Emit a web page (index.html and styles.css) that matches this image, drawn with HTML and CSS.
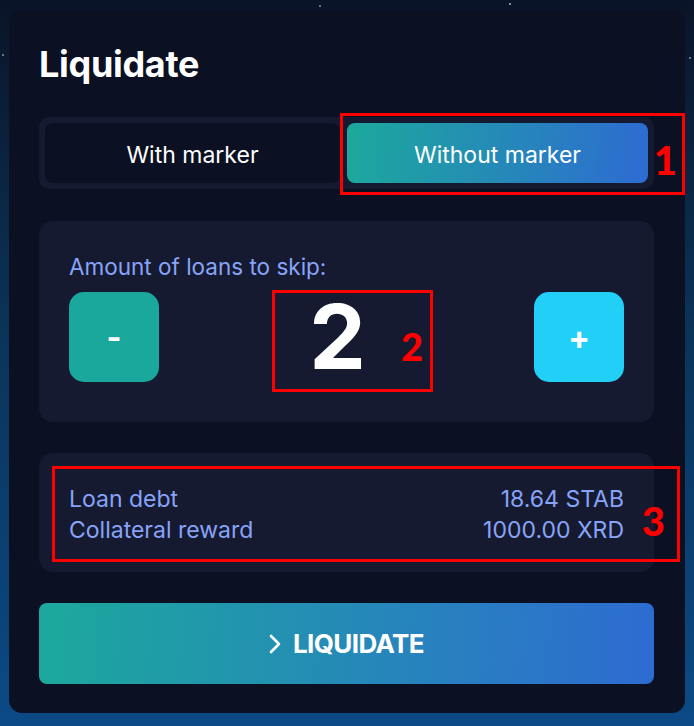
FILE: index.html
```html
<!DOCTYPE html>
<html>
<head>
    <title>Liquidate</title>
    <link rel="stylesheet" href="styles.css">
</head>
<body>
    <div id="liquidate-card">
        <h1 class="card-title">Liquidate</h1>

        <div class="mode-switch">
            <button class="mode-button">With marker</button>
            <button class="mode-button active">Without marker</button>
        </div>

        <div class="panel skip-panel">
            <div class="panel-label">Amount of loans to skip:</div>
            <div class="counter">
                <button class="counter-button minus">-</button>
                <span class="counter-value">2</span>
                <button class="counter-button plus">+</button>
            </div>
        </div>

        <div class="panel info-panel">
            <div class="info-row">
                <span>Loan debt</span>
                <span>18.64 STAB</span>
            </div>
            <div class="info-row">
                <span>Collateral reward</span>
                <span>1000.00 XRD</span>
            </div>
        </div>

        <button id="liquidate-button">
            <svg class="chevron" width="12" height="20" viewBox="0 0 12 20">
                <path d="M2 2 L10 10 L2 18" fill="none" stroke="#fff" stroke-width="2.6" stroke-linecap="round" stroke-linejoin="round"/>
            </svg>
            LIQUIDATE
        </button>

        <!-- annotation marks -->
        <div class="mark mark-one"><span class="mark-num">1</span></div>
        <div class="mark mark-two"><span class="mark-num">2</span></div>
        <div class="mark mark-three"><span class="mark-num">3</span></div>
    </div>
</body>
</html>
```

FILE: styles.css
```css
body {
    margin: 0;
    padding: 10px 9px 13px 9px;
    font-family: Inter, Lato, sans-serif;
    background-color: #0a1a30;
    background-image:
        radial-gradient(circle at 55px 70px, rgba(255,255,255,0.5) 0 1px, transparent 1.5px),
        radial-gradient(circle at 320px 6px, rgba(255,255,255,0.4) 0 1px, transparent 1.5px),
        radial-gradient(circle at 510px 4px, rgba(255,255,255,0.5) 0 1px, transparent 1.5px),
        radial-gradient(circle at 3px 55px, rgba(255,255,255,0.4) 0 1px, transparent 1.5px),
        radial-gradient(circle at 690px 58px, rgba(255,255,255,0.4) 0 1px, transparent 1.5px),
        linear-gradient(180deg, #0a1428 0%, #0b3358 45%, #0b4a86 100%);
}

#liquidate-card {
    position: relative;
    height: 703px;
    box-sizing: border-box;
    padding: 30px 31px 28px 30px;
    background-color: #0b1022;
    border-radius: 13px;
    display: flex;
    flex-direction: column;
}

.card-title {
    margin: 0 0 31px 0;
    padding-top: 3px;
    font-size: 36px;
    line-height: 43px;
    font-weight: 700;
    color: #ffffff;
    letter-spacing: -0.3px;
}

.mode-switch {
    display: grid;
    grid-template-columns: 295px 1fr;
    gap: 7px;
    height: 72px;
    box-sizing: border-box;
    padding: 6px;
    background-color: #141a30;
    border-radius: 10px;
}

.mode-button {
    border: none;
    border-radius: 8px;
    padding-top: 4px;
    background-color: #0b1022;
    color: #ffffff;
    font-family: inherit;
    font-size: 23px;
    cursor: pointer;
}

.mode-button.active {
    background: linear-gradient(95deg, #1ca99c 0%, #2e6bd2 100%);
}

.panel {
    background-color: #151a30;
    border-radius: 14px;
    box-sizing: border-box;
}

.skip-panel {
    margin-top: 32px;
    height: 201px;
    padding: 35px 30px 40px 30px;
}

.panel-label {
    font-size: 22.5px;
    line-height: 22px;
    color: #88a4f8;
}

.counter {
    margin-top: 14px;
    display: flex;
    align-items: center;
    justify-content: space-between;
}

.counter-button {
    width: 90px;
    height: 90px;
    border: none;
    border-radius: 15px;
    color: #ffffff;
    font-family: inherit;
    font-size: 32px;
    font-weight: 700;
    cursor: pointer;
}

.counter-button.minus {
    background-color: #1ba89c;
}

.counter-button.plus {
    background-color: #22d0f7;
}

.counter-value {
    padding-right: 18px;
    font-size: 90px;
    line-height: 90px;
    font-weight: 700;
    color: #ffffff;
}

.info-panel {
    margin-top: 31px;
    height: 119px;
    padding: 31px 30px 26px 30px;
}

.info-row {
    display: flex;
    justify-content: space-between;
    font-size: 23px;
    line-height: 31px;
    color: #88a4f8;
}

#liquidate-button {
    margin-top: 31px;
    height: 81px;
    border: none;
    border-radius: 8px;
    background: linear-gradient(95deg, #1ca99c 0%, #2e6bd2 100%);
    color: #ffffff;
    font-family: inherit;
    font-size: 26px;
    font-weight: 700;
    letter-spacing: -0.6px;
    display: flex;
    align-items: center;
    justify-content: center;
    gap: 12px;
    cursor: pointer;
}

/* red annotation boxes drawn over the screenshot */
.mark {
    position: absolute;
    border: 3px solid #ff0000;
}

.mark-num {
    position: absolute;
    color: #ff0000;
    font-family: Lato, sans-serif;
    font-weight: 900;
    line-height: 1;
}

.mark-one {
    left: 331px;
    top: 103px;
    width: 339px;
    height: 76px;
}

.mark-one .mark-num {
    right: 5px;
    top: 24px;
    font-size: 40px;
}

.mark-two {
    left: 263px;
    top: 280px;
    width: 155px;
    height: 96px;
}

.mark-two .mark-num {
    left: 126px;
    top: 34px;
    font-size: 38px;
}

.mark-three {
    left: 43px;
    top: 456px;
    width: 622px;
    height: 90px;
}

.mark-three .mark-num {
    right: 12px;
    top: 32px;
    font-size: 40px;
}
```
